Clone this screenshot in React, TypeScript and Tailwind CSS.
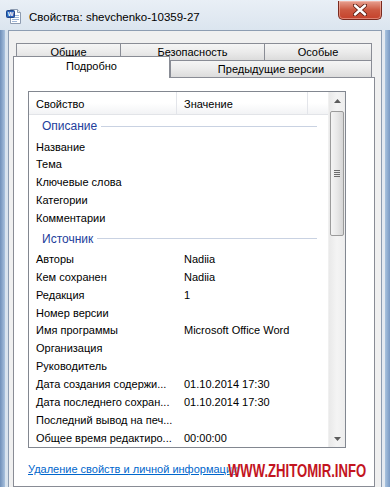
import React from "react";

function WordIcon() {
  return (
    <svg width="17" height="17" viewBox="0 0 17 17" className="mt-[8px] shrink-0">
      <path d="M4.5 1.5 H11.5 L14.5 4.5 V15.5 H4.5 Z" fill="#ffffff" stroke="#8d9bb0" />
      <path d="M11.5 1.5 V4.5 H14.5" fill="#e6ebf2" stroke="#8d9bb0" />
      <line x1="9" y1="7.5" x2="13" y2="7.5" stroke="#9db4d6" />
      <line x1="6" y1="9.5" x2="13" y2="9.5" stroke="#9db4d6" />
      <line x1="6" y1="11.5" x2="13" y2="11.5" stroke="#9db4d6" />
      <line x1="6" y1="13.5" x2="11" y2="13.5" stroke="#9db4d6" />
      <rect x="0.5" y="2.5" width="8" height="7" rx="1" fill="#2d62b8" stroke="#1c4589" />
      <text x="4.5" y="8.3" textAnchor="middle" fontSize="6" fontWeight="bold" fill="#ffffff" fontFamily="Liberation Sans, Arial, sans-serif">W</text>
    </svg>
  );
}

function CloseButton() {
  return (
    <div className="ml-auto mt-[1px] w-[44px] h-[19px] rounded-b-[5px] border border-t-0 border-[#7a2a1f] bg-gradient-to-b from-[#e6a091] via-[#cc5840] to-[#c5412b] flex items-center justify-center shadow-[inset_0_0_0_1px_rgba(255,210,200,0.45)]">
      <svg width="14" height="12" viewBox="0 0 14 12">
        <path d="M2 1.5 L12 10.5 M12 1.5 L2 10.5" stroke="#5a1c12" strokeWidth="4.2" strokeLinecap="round" />
        <path d="M2 1.5 L12 10.5 M12 1.5 L2 10.5" stroke="#ffffff" strokeWidth="2.4" strokeLinecap="round" />
      </svg>
    </div>
  );
}

function Tab({ w, label, last }: { w: string; label: string; last?: boolean }) {
  return (
    <div
      className={`${w} h-full border-t border-l ${last ? "border-r" : ""} border-[#898c95] bg-gradient-to-b from-[#f5f5f5] via-[#ebebeb] to-[#dcdcdc] flex items-center justify-center leading-none`}
    >
      {label}
    </div>
  );
}

function Group({ label }: { label: string }) {
  return (
    <div className="h-[23px] flex items-center pl-[13px] pr-[11px]">
      <span className="text-[#22409c] text-[12px]">{label}</span>
      <div className="flex-1 h-px bg-[#c9d2e2] ml-[4px]" />
    </div>
  );
}

function Row({ name, value }: { name: string; value?: string }) {
  return (
    <div className="h-[18px] flex items-center whitespace-nowrap">
      <div className="w-[148px] pl-[7px] overflow-hidden">{name}</div>
      <div className="pl-[7px]">{value ?? ""}</div>
    </div>
  );
}

function Arrow({ up }: { up?: boolean }) {
  return (
    <div className="h-[17px] flex items-center justify-center">
      <svg width="7" height="4" viewBox="0 0 7 4">
        {up ? <path d="M0 4 L3.5 0 L7 4 Z" fill="#5c5c5c" /> : <path d="M0 0 L3.5 4 L7 0 Z" fill="#5c5c5c" />}
      </svg>
    </div>
  );
}

export default function App() {
  return (
    <div className="relative w-[390px] h-[487px] overflow-hidden flex flex-col bg-[#dde6ef] font-['Liberation_Sans',Arial,sans-serif] text-[11px] text-black">
      {/* Title bar */}
      <div className="h-[30px] shrink-0 flex items-start pl-[6px] pr-[8px] bg-gradient-to-b from-[#e9eff6] to-[#dbe5ef]">
        <WordIcon />
        <span className="ml-[6px] mt-[10px] leading-[14px] text-[11.5px]">Свойства: shevchenko-10359-27</span>
        <CloseButton />
      </div>

      <div className="flex-1 flex min-h-0">
        {/* left frame */}
        <div className="w-[8px] flex shrink-0">
          <div className="w-[5px] bg-gradient-to-r from-[#6f8fb9] to-[#a9c2de]" />
          <div className="w-[3px] bg-[#d8e3ee]" />
        </div>

        {/* client */}
        <div className="w-[374px] border-l border-t border-r border-[#8d9db2] bg-[#f0f0f0] pl-[4px] pt-[12px] flex flex-col">
          {/* tab row 1 */}
          <div className="ml-[3px] flex h-[17px]">
            <Tab w="w-[104px]" label="Общие" />
            <Tab w="w-[144px]" label="Безопасность" />
            <Tab w="w-[108px]" label="Особые" last />
          </div>
          {/* tab row 2 */}
          <div className="flex h-[17px] items-end">
            <div className="relative z-10 w-[157px] h-[22px] mb-[-1px] bg-white border-l border-t border-r border-[#898c95] flex items-start justify-center pt-[4px] leading-none">
              Подробно
            </div>
            <Tab w="w-[202px]" label="Предыдущие версии" last />
          </div>

          {/* panel */}
          <div className="w-[362px] flex-1 border border-[#898c95] bg-white pl-[14px] pt-[13px]">
            <div className="w-[318px] h-[357px] border border-[#828790] flex overflow-hidden">
              <div className="w-[299px] flex flex-col overflow-hidden">
                <div className="h-[23px] shrink-0 flex bg-gradient-to-b from-white via-white to-[#f2f3f5] border-b border-[#e2e4e8]">
                  <div className="w-[148px] pl-[7px] pt-[2px] flex items-center border-r border-[#e3e5ea]">Свойство</div>
                  <div className="w-[131px] pl-[7px] pt-[2px] flex items-center border-r border-[#e3e5ea]">Значение</div>
                  <div className="flex-1" />
                </div>
                <Group label="Описание" />
                <Row name="Название" />
                <Row name="Тема" />
                <Row name="Ключевые слова" />
                <Row name="Категории" />
                <Row name="Комментарии" />
                <Group label="Источник" />
                <Row name="Авторы" value="Nadiia" />
                <Row name="Кем сохранен" value="Nadiia" />
                <Row name="Редакция" value="1" />
                <Row name="Номер версии" />
                <Row name="Имя программы" value="Microsoft Office Word" />
                <Row name="Организация" />
                <Row name="Руководитель" />
                <Row name="Дата создания содержи..." value="01.10.2014 17:30" />
                <Row name="Дата последнего сохран..." value="01.10.2014 17:30" />
                <Row name="Последний вывод на печ..." />
                <Row name="Общее время редактиро..." value="00:00:00" />
              </div>
              {/* scrollbar */}
              <div className="w-[17px] flex flex-col bg-gradient-to-r from-[#e9e9e9] via-[#f4f4f4] to-[#ededed] border-l border-[#f0f0f0]">
                <Arrow up />
                <div className="mt-[2px] mx-[1px] h-[125px] rounded-[2px] border border-[#9b9b9b] bg-gradient-to-r from-[#f4f4f4] via-[#e8e8e8] to-[#d6d6d6] flex flex-col items-center justify-center gap-[1px]">
                  <div className="w-[6px] h-px bg-[#6c6c6c]" />
                  <div className="w-[6px] h-px bg-[#6c6c6c]" />
                  <div className="w-[6px] h-px bg-[#6c6c6c]" />
                  <div className="w-[6px] h-px bg-[#6c6c6c]" />
                </div>
                <div className="flex-1" />
                <Arrow />
              </div>
            </div>
            <div className="mt-[13px] leading-[16px] text-[#0066cc] underline whitespace-nowrap">
              Удаление свойств и личной информации
            </div>
          </div>
        </div>

        {/* right frame */}
        <div className="w-[8px] flex shrink-0">
          <div className="w-[3px] bg-[#e3e9f0]" />
          <div className="w-[5px] bg-gradient-to-r from-[#a8c3df] to-[#7a9ac4]" />
        </div>
      </div>

      {/* watermark overlay */}
      <div className="absolute left-[228px] top-[461px] w-[150px] h-[20px]">
        <span className="inline-block whitespace-nowrap text-[19px] font-bold leading-[20px] text-[#c3141e] [transform:scaleX(0.69)] [transform-origin:0_0] [text-shadow:0_0_2px_#ffffff]">
          WWW.ZHITOMIR.INFO
        </span>
      </div>
    </div>
  );
}
